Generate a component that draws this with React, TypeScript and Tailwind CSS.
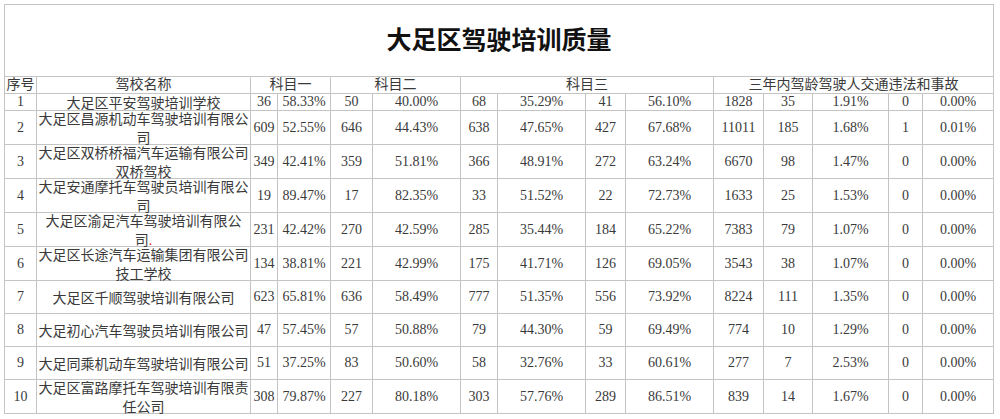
import React from "react";

type Row = {
  no: string;
  name: React.ReactNode[];
  v: string[];
};

const rows: Row[] = [
  { no: "1", name: ["大足区平安驾驶培训学校"], v: ["36", "58.33%", "50", "40.00%", "68", "35.29%", "41", "56.10%", "1828", "35", "1.91%", "0", "0.00%"] },
  { no: "2", name: ["大足区昌源机动车驾驶培训有限公", "司"], v: ["609", "52.55%", "646", "44.43%", "638", "47.65%", "427", "67.68%", "11011", "185", "1.68%", "1", "0.01%"] },
  { no: "3", name: ["大足区双桥桥福汽车运输有限公司", "双桥驾校"], v: ["349", "42.41%", "359", "51.81%", "366", "48.91%", "272", "63.24%", "6670", "98", "1.47%", "0", "0.00%"] },
  { no: "4", name: ["大足安通摩托车驾驶员培训有限公", "司"], v: ["19", "89.47%", "17", "82.35%", "33", "51.52%", "22", "72.73%", "1633", "25", "1.53%", "0", "0.00%"] },
  { no: "5", name: ["大足区渝足汽车驾驶培训有限公", <>司<span className="text-[#e0301e]">.</span></>], v: ["231", "42.42%", "270", "42.59%", "285", "35.44%", "184", "65.22%", "7383", "79", "1.07%", "0", "0.00%"] },
  { no: "6", name: ["大足区长途汽车运输集团有限公司", "技工学校"], v: ["134", "38.81%", "221", "42.99%", "175", "41.71%", "126", "69.05%", "3543", "38", "1.07%", "0", "0.00%"] },
  { no: "7", name: ["大足区千顺驾驶培训有限公司"], v: ["623", "65.81%", "636", "58.49%", "777", "51.35%", "556", "73.92%", "8224", "111", "1.35%", "0", "0.00%"] },
  { no: "8", name: ["大足初心汽车驾驶员培训有限公司"], v: ["47", "57.45%", "57", "50.88%", "79", "44.30%", "59", "69.49%", "774", "10", "1.29%", "0", "0.00%"] },
  { no: "9", name: ["大足同乘机动车驾驶培训有限公司"], v: ["51", "37.25%", "83", "50.60%", "58", "32.76%", "33", "60.61%", "277", "7", "2.53%", "0", "0.00%"] },
  { no: "10", name: ["大足区富路摩托车驾驶培训有限责", "任公司"], v: ["308", "79.87%", "227", "80.18%", "303", "57.76%", "289", "86.51%", "839", "14", "1.67%", "0", "0.00%"] },
];

const cell = "bg-white flex items-center justify-center text-center whitespace-nowrap overflow-visible";

export default function App() {
  return (
    <div className="w-[1000px] h-[419px] bg-white pt-[4px] pl-[4px] overflow-hidden">
      <div
        className="inline-grid bg-[#c4c4c4] p-px gap-px text-[14px] leading-[16px] text-[#3a3a3a]"
        style={{ fontFamily: '"Liberation Serif", "Noto Sans CJK SC", serif' }}
      >
        <div className="grid grid-cols-[31px_213px_26px_52px_41px_87px_36px_87px_39px_87px_49px_48px_75px_33px_70px] grid-rows-[71px_16px_16px_33px_33px_33px_33px_33px_32px_32px_32px_33px] gap-px">
          <div
            className={`${cell} col-span-15 text-[25px] font-bold text-[#111] pb-[5px]`}
            style={{ fontFamily: '"Noto Sans CJK SC", serif' }}
          >
            大足区驾驶培训质量
          </div>
          <div className={cell}>序号</div>
          <div className={cell}>驾校名称</div>
          <div className={`${cell} col-span-2`}>科目一</div>
          <div className={`${cell} col-span-2`}>科目二</div>
          <div className={`${cell} col-span-4`}>科目三</div>
          <div className={`${cell} col-span-5`}>三年内驾龄驾驶人交通违法和事故</div>
          {rows.map((r) => (
            <React.Fragment key={r.no}>
              <div className={cell}>{r.no}</div>
              <div className={`${cell} flex-col leading-[19px] pt-[3px]`}>
                {r.name.map((n, i) => (
                  <span key={i}>{n}</span>
                ))}
              </div>
              {r.v.map((x, i) => (
                <div key={i} className={cell}>
                  {x}
                </div>
              ))}
            </React.Fragment>
          ))}
        </div>
      </div>
    </div>
  );
}
